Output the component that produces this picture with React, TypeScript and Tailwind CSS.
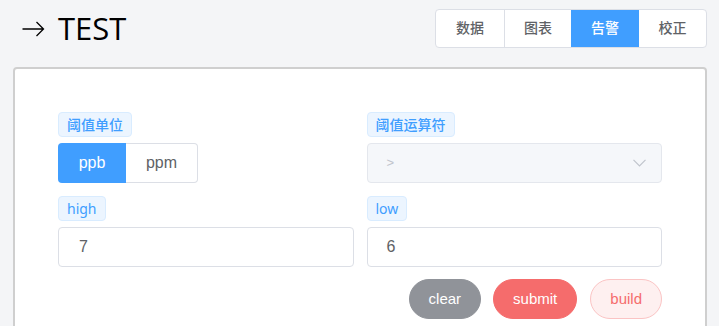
import React from "react";

const cjk = { fontFamily: '"Liberation Sans", "Noto Sans CJK SC", sans-serif' };
const tagFont = { fontFamily: '"Noto Sans", "Noto Sans CJK SC", sans-serif' };

function Tag({ children, medium }: { children: React.ReactNode; medium?: boolean }) {
  return (
    <div className="flex">
      <span
        className={
          "h-[25px] px-2 border border-[#d9ecff] bg-[#ecf5ff] text-[#409eff] text-[14px] leading-[23px] rounded-[4px] " +
          (medium ? "font-medium" : "font-normal")
        }
        style={tagFont}
      >
        {children}
      </span>
    </div>
  );
}

export default function App() {
  const tabs = ["数据", "图表", "告警", "校正"];
  return (
    <div className="w-[719px] h-[326px] overflow-hidden bg-[#f4f5f7] pl-[13px] pr-[12px]" style={cjk}>
      <div className="flex items-center justify-between pt-[9px] h-[48px]">
        <div className="flex items-center pl-[9px] h-[39px]">
          <svg width="23" height="16" viewBox="0 0 23 16" className="mr-[13px] mt-[1px]">
            <path d="M0.5 8 H21.5 M14.5 1 L21.5 8 L14.5 15" fill="none" stroke="#000" strokeWidth="1.3" />
          </svg>
          <span className="text-[31px] leading-[39px] text-black" style={{ fontFamily: '"Open Sans", sans-serif' }}>
            TEST
          </span>
        </div>
        <div className="flex h-[39px] border border-[#dcdfe6] rounded-[4px] overflow-hidden bg-white">
          {tabs.map((t, i) => (
            <div
              key={t}
              className={
                "flex items-center justify-center text-[14px] font-medium " +
                (i % 2 === 0 ? "w-[68px] " : "w-[67px] ") +
                (i === 2 ? "bg-[#409eff] text-white" : "text-[#606266]") +
                (i === 1 ? " border-l border-[#dcdfe6]" : "")
              }
            >
              {t}
            </div>
          ))}
        </div>
      </div>
      <div className="mt-[19px] bg-white border-2 border-[#cfcfcf] rounded-[4px] px-[43px] pt-[43px] h-[300px]">
        <div className="grid grid-cols-2 gap-x-[13px] gap-y-[13px]">
          <div className="flex flex-col gap-[6px]">
            <Tag medium>阈值单位</Tag>
            <div className="flex">
              <div className="w-[68px] h-[40px] bg-[#409eff] text-white text-[16px] flex items-center justify-center rounded-l-[4px]">
                ppb
              </div>
              <div className="w-[72px] h-[40px] border border-[#dcdfe6] border-l-0 rounded-r-[4px] text-[#606266] text-[16px] flex items-center justify-center">
                ppm
              </div>
            </div>
          </div>
          <div className="flex flex-col gap-[6px]">
            <Tag medium>阈值运算符</Tag>
            <div className="h-[40px] bg-[#f5f7fa] border border-[#e4e7ed] rounded-[4px] flex items-center justify-between pl-[19px] pr-[15px]">
              <span className="text-[13px] text-[#c0c4cc]">&gt;</span>
              <svg width="13" height="8" viewBox="0 0 13 8">
                <path d="M0.5 0.8 L6.5 6.8 L12.5 0.8" fill="none" stroke="#c0c4cc" strokeWidth="1.2" />
              </svg>
            </div>
          </div>
          <div className="flex flex-col gap-[6px]">
            <Tag>high</Tag>
            <div className="h-[40px] border border-[#dcdfe6] rounded-[4px] flex items-center pl-[20px] text-[16px] text-[#606266]">
              7
            </div>
          </div>
          <div className="flex flex-col gap-[6px]">
            <Tag>low</Tag>
            <div className="h-[40px] border border-[#dcdfe6] rounded-[4px] flex items-center pl-[19px] text-[16px] text-[#606266]">
              6
            </div>
          </div>
        </div>
        <div className="flex justify-end gap-[12px] mt-[12px]">
          <button className="h-[40px] px-[19px] rounded-full border border-[#909399] bg-[#909399] text-white text-[15px]">
            clear
          </button>
          <button className="h-[40px] px-[19px] rounded-full border border-[#f56c6c] bg-[#f56c6c] text-white text-[15px] mr-[1px]">
            submit
          </button>
          <button className="h-[40px] px-[19px] rounded-full border border-[#fbc4c4] bg-[#fef0f0] text-[#f56c6c] text-[15px]">
            build
          </button>
        </div>
      </div>
    </div>
  );
}
